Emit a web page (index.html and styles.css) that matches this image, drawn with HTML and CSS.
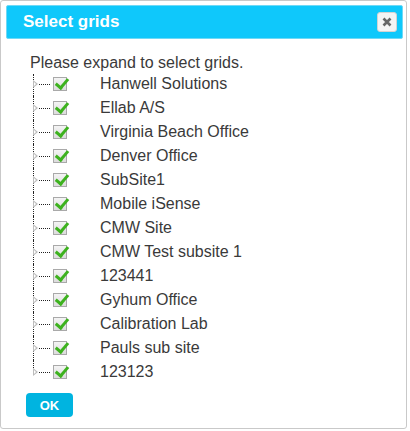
FILE: index.html
```html
<!DOCTYPE html>
<html lang="en">
  <head>
    <meta charset="UTF-8" />
    <title>Select grids</title>
    <link rel="stylesheet" href="styles.css">
  </head>
  <body>
    <div class="dialog">
      <div class="titlebar">
        <span class="title">Select grids</span>
        <button class="close" title="Close">
          <svg width="10" height="10" viewBox="0 0 10 10">
            <path d="M1.5 1.5 L8.5 8.5 M8.5 1.5 L1.5 8.5" stroke="#666" stroke-width="2.6" />
          </svg>
        </button>
      </div>

      <div class="content">
        <p class="hint">Please expand to select grids.</p>

        <!-- grid tree -->
        <ul class="tree">
          <li><span class="toggle"></span><span class="hline"></span><span class="check"></span><span class="label">Hanwell Solutions</span></li>
          <li><span class="toggle"></span><span class="hline"></span><span class="check"></span><span class="label">Ellab A/S</span></li>
          <li><span class="toggle"></span><span class="hline"></span><span class="check"></span><span class="label">Virginia Beach Office</span></li>
          <li><span class="toggle"></span><span class="hline"></span><span class="check"></span><span class="label">Denver Office</span></li>
          <li><span class="toggle"></span><span class="hline"></span><span class="check"></span><span class="label">SubSite1</span></li>
          <li><span class="toggle"></span><span class="hline"></span><span class="check"></span><span class="label">Mobile iSense</span></li>
          <li><span class="toggle"></span><span class="hline"></span><span class="check"></span><span class="label">CMW Site</span></li>
          <li><span class="toggle"></span><span class="hline"></span><span class="check"></span><span class="label">CMW Test subsite 1</span></li>
          <li><span class="toggle"></span><span class="hline"></span><span class="check"></span><span class="label">123441</span></li>
          <li><span class="toggle"></span><span class="hline"></span><span class="check"></span><span class="label">Gyhum Office</span></li>
          <li><span class="toggle"></span><span class="hline"></span><span class="check"></span><span class="label">Calibration Lab</span></li>
          <li><span class="toggle"></span><span class="hline"></span><span class="check"></span><span class="label">Pauls sub site</span></li>
          <li><span class="toggle"></span><span class="hline"></span><span class="check"></span><span class="label">123123</span></li>
        </ul>

        <button class="ok">OK</button>
      </div>
    </div>
  </body>
</html>
```

FILE: styles.css
```css
* {
  margin: 0;
  padding: 0;
  box-sizing: border-box;
}

body {
  background: #fff;
  font-family: "Liberation Sans", Arial, sans-serif;
  color: #3a3a3a;
}

.dialog {
  width: 407px;
  height: 429px;
  border: 1px solid #c9c9c9;
  border-radius: 3px;
  padding: 4px 3px 0 5px;
  background: #fff;
}

/* title bar */
.titlebar {
  height: 34px;
  display: flex;
  align-items: center;
  justify-content: space-between;
  padding: 0 5px 0 16px;
  background: #0fc8fb;
  border: 1px solid #6fd9f6;
  border-radius: 2px;
}

.title {
  color: #fff;
  font-size: 17px;
  font-weight: bold;
}

.close {
  width: 20px;
  height: 20px;
  display: flex;
  align-items: center;
  justify-content: center;
  background: #f4f4f4;
  border: 1px solid #d3d3d3;
  border-radius: 3px;
}

.content {
  padding: 15px 0 0 24px;
}

.hint {
  font-size: 16px;
  line-height: 18px;
}

/* tree */
.tree {
  list-style: none;
  margin-left: 2px;
}

.tree li {
  position: relative;
  height: 24px;
  display: flex;
  align-items: center;
  font-size: 16px;
}

.tree li::before {
  content: "";
  position: absolute;
  left: 1px;
  top: 0;
  height: 100%;
  border-left: 1px dotted #222;
}

.tree li:first-child::before {
  top: 2px;
}

.tree li:last-child::before {
  height: 50%;
}

.toggle {
  position: relative;
  width: 5px;
  height: 9px;
  margin-left: 1px;
  z-index: 1;
}

.toggle::after {
  content: "";
  position: absolute;
  left: 0;
  top: 0;
  border-left: 5px solid #bcbcbc;
  border-top: 4.5px solid transparent;
  border-bottom: 4.5px solid transparent;
}

.toggle::before {
  content: "";
  position: absolute;
  left: 1px;
  top: 2px;
  border-left: 2.5px solid #fff;
  border-top: 2.5px solid transparent;
  border-bottom: 2.5px solid transparent;
  z-index: 1;
}

.hline {
  width: 11px;
  margin-left: 1px;
  border-top: 1px dotted #222;
}

.check {
  position: relative;
  width: 14px;
  height: 14px;
  margin-left: 3px;
  border: 1px solid #a9a9a9;
  background: linear-gradient(#f4f4f4, #dcdcdc);
}

.check::after {
  content: "";
  position: absolute;
  left: 4px;
  top: -2px;
  width: 5px;
  height: 10px;
  border-right: 3px solid #3db21e;
  border-bottom: 3px solid #3db21e;
  transform: rotate(40deg);
}

.label {
  margin-left: 33px;
}

/* ok button */
.ok {
  margin: 9px 0 0 -4px;
  width: 47px;
  height: 24px;
  border: none;
  border-radius: 4px;
  background: #00b4e0;
  color: #fff;
  font-family: "Liberation Sans", Arial, sans-serif;
  font-size: 13px;
  font-weight: bold;
}
```
